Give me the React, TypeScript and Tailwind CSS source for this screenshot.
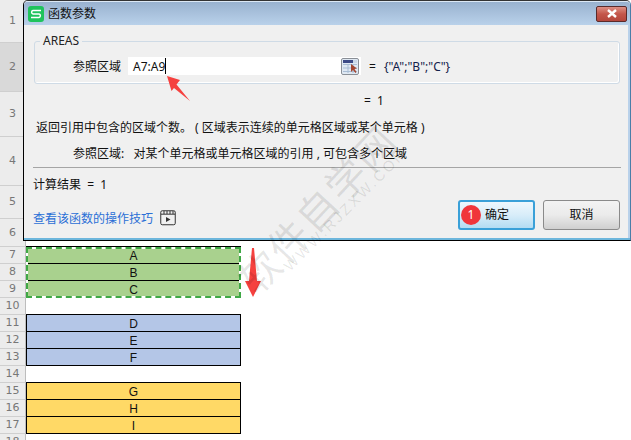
const FONT = "font-['Noto_Sans','Noto_Sans_CJK_SC',sans-serif]";

type Row = { n: number; h: number; label?: string; fill?: string; active?: boolean };

const ROWS: Row[] = [
  { n: 1, h: 43 },
  { n: 2, h: 49, active: true },
  { n: 3, h: 45 },
  { n: 4, h: 49 },
  { n: 5, h: 33 },
  { n: 6, h: 28 },
  { n: 7, h: 17, label: "A", fill: "bg-[#a9d18e]" },
  { n: 8, h: 17, label: "B", fill: "bg-[#a9d18e]" },
  { n: 9, h: 17, label: "C", fill: "bg-[#a9d18e]" },
  { n: 10, h: 17 },
  { n: 11, h: 17, label: "D", fill: "bg-[#b4c6e7]" },
  { n: 12, h: 17, label: "E", fill: "bg-[#b4c6e7]" },
  { n: 13, h: 17, label: "F", fill: "bg-[#b4c6e7]" },
  { n: 14, h: 17 },
  { n: 15, h: 17, label: "G", fill: "bg-[#ffd966]" },
  { n: 16, h: 17, label: "H", fill: "bg-[#ffd966]" },
  { n: 17, h: 17, label: "I", fill: "bg-[#ffd966]" },
  { n: 18, h: 17 },
];

function Sheet() {
  return (
    <div className="flex flex-col">
      {ROWS.map((r) => (
        <div key={r.n} className="flex" style={{ height: r.h }}>
          <div
            className={`w-[26px] shrink-0 pt-px flex items-center justify-center border-r border-b border-r-[#bdbdbd] border-b-[#cfcfcf] text-[11px] text-[#777] font-['DejaVu_Sans',sans-serif] ${
              r.active ? "bg-[#d9d9d9] text-[#3e8e41]" : "bg-[#ececec]"
            }`}
          >
            {r.n}
          </div>
          {r.label && (
            <div
              className={`w-[215px] -mt-px pt-[2px] flex items-center justify-center border border-black text-[12px] text-[#111] font-['Liberation_Sans',sans-serif] ${r.fill}`}
              style={{ height: r.h + 1 }}
            >
              {r.label}
            </div>
          )}
        </div>
      ))}
    </div>
  );
}

function AppLogo() {
  return (
    <svg width="16" height="16" viewBox="0 0 16 16" className="shrink-0">
      <rect width="16" height="16" rx="3" fill="#1fc35c" />
      <path d="M13 4.5H5A1.8 1.8 0 0 0 5 8H11A1.8 1.8 0 0 1 11 11.5H3" fill="none" stroke="#fff" strokeWidth="1.5" />
    </svg>
  );
}

function RefIcon() {
  return (
    <svg width="18" height="17" viewBox="0 0 18 17" className="shrink-0">
      <rect x="0.5" y="0.5" width="17" height="16" rx="1.5" fill="#dfe8f2" stroke="#8a8f96" />
      <rect x="2" y="2" width="10" height="3" fill="#3c4a86" />
      <rect x="12" y="2" width="4" height="3" fill="#c9d6e6" />
      <path d="M2 6.5H16M2 10H16M2 13.5H16M7 6V15M12 6V15" stroke="#a9bdd4" strokeWidth="1" fill="none" />
      <path d="M10 6L10 14L12 12L14.5 15L15.5 14L13.5 11L16 10.5Z" fill="#a3452f" />
    </svg>
  );
}

function VideoIcon() {
  return (
    <svg width="16" height="16" viewBox="0 0 16 16" className="shrink-0">
      <rect x="0.75" y="0.75" width="14.5" height="14" rx="1.5" fill="none" stroke="#333" strokeWidth="1" />
      <path d="M1 4.2H15M4 1V4M7 1V4M10 1V4M13 1V4" stroke="#333" strokeWidth="1" fill="none" />
      <path d="M6 7L10.5 9.5L6 12Z" fill="#333" />
    </svg>
  );
}

function Dialog() {
  return (
    <div
      className={`absolute left-[23px] top-0 w-[608px] h-[241px] flex flex-col rounded-t-[5px] border border-black border-t-[#333] border-r-[#4a7ea8] bg-[#f0f0f0] shadow-[inset_0_-2px_0_#6db6dc,inset_-2px_0_0_#b9d1ea] text-[12px] text-[#111] ${FONT}`}
    >
      <div className="h-[24px] shrink-0 flex items-center pl-[4px] pr-[3px] rounded-t-[4px] bg-gradient-to-b from-[#99b2cf] to-[#b9d1ea] border-t border-white/50">
        <AppLogo />
        <span className="ml-[4px] text-[12px]">函数参数</span>
        <div className="ml-auto w-[31px] h-[16px] rounded-[2px] border border-[#5a2a2a] bg-gradient-to-b from-[#dd8f84] via-[#c4574b] to-[#b4463c] flex items-center justify-center">
          <svg width="12" height="9" viewBox="0 0 12 9">
            <path d="M2 1L10 8M10 1L2 8" stroke="#fff" strokeWidth="2.4" fill="none" />
          </svg>
        </div>
      </div>

      <div className="relative mx-[10px] mt-[16px] h-[43px] pt-[7px] rounded-[3px] border border-[#cfdbe6] shadow-[inset_-1px_-1px_0_#fff] flex items-center pl-[38px]">
        <span className="absolute left-[5px] -top-[10px] px-[3px] bg-[#f0f0f0] text-[12px] leading-[18px] text-[#222]">AREAS</span>
        <span className="w-[48px] pt-[2px]">参照区域</span>
        <div className="ml-[7px] w-[233px] h-[18px] bg-white flex items-center pl-[5px] pr-[2px]">
          <span className="text-[12px] pt-[2px]">A7:A9</span>
          <span className="w-px h-[16px] bg-black" />
          <span className="ml-auto"><RefIcon /></span>
        </div>
        <span className="ml-[8px] pt-[2px]">=</span>
        <span className="ml-[8px] pt-[2px] text-[12px] text-[#12204a]">{'{"A";"B";"C"}'}</span>
      </div>

      <div className="mt-[7px] h-[18px] pl-[340px] leading-[20px]">
        = &nbsp;1
      </div>

      <div className="mt-[9px] h-[18px] pl-[12px] leading-[20px] whitespace-nowrap">
        返回引用中包含的区域个数。 ( 区域表示连续的单元格区域或某个单元格 )
      </div>
      <div className="mt-[8px] h-[18px] pl-[49px] leading-[20px] whitespace-nowrap">
        参照区域:&nbsp;&nbsp; 对某个单元格或单元格区域的引用 , 可包含多个区域
      </div>

      <div className="mx-[9px] mt-[5px] h-px bg-[#a5a5a5]" />

      <div className="flex mt-[7px] pl-[9px] pr-[10px]">
        <div className="flex flex-col">
          <span className="h-[18px] leading-[20px]">计算结果 &nbsp;= &nbsp;1</span>
          <span className="mt-[16px] flex items-center gap-[7px] h-[18px]">
            <span className="text-[#2a6fd6] pt-[2px]">查看该函数的操作技巧</span>
            <VideoIcon />
          </span>
        </div>
        <div className="ml-auto mt-[25px] flex gap-[8px]">
          <div className="relative w-[77px] h-[30px] rounded-[3px] border-2 border-[#3aa0d8] bg-gradient-to-b from-[#eef7fd] via-[#d8edf9] to-[#b3dcf3] flex items-center pl-[24px]">
            <span className="absolute left-[1px] top-[3px] w-[20px] h-[20px] rounded-full bg-[#f0353b] text-white text-[12px] leading-[20px] text-center">1</span>
            <span className="ml-[1px]">确定</span>
          </div>
          <div className="w-[77px] h-[30px] rounded-[3px] border border-[#8a8a8a] bg-gradient-to-b from-[#f3f3f3] via-[#ebebeb] to-[#cfcfcf] flex items-center justify-center">
            取消
          </div>
        </div>
      </div>
    </div>
  );
}

function Annotations() {
  return (
    <>
      {/* selection marquee over rows 7-9 */}
      <div className="absolute left-[26px] top-[247px] w-[215px] h-[51px] border-2 border-white">
        <div className="absolute -inset-[2px] border-2 border-dashed border-[#3fa845]" />
      </div>

      {/* red arrows */}
      <svg className="absolute left-0 top-0 pointer-events-none" width="631" height="440" viewBox="0 0 631 440">
        <path d="M167 76L180 80L176.5 84.5L190 101L174 88L171.5 91Z" fill="#f5413f" />
        <path d="M252 248H254L257 281H261L253 297L245 281H249Z" fill="#f5413f" />
      </svg>

      {/* watermark */}
      <div className="absolute left-[213px] top-[190px] w-[200px] -rotate-[47deg] text-center text-[40px] leading-[44px] tracking-[2px] whitespace-nowrap text-black/10 font-['Noto_Sans_CJK_SC',sans-serif] pointer-events-none">
        软件自学网
      </div>
      <div className="absolute left-[263px] top-[203px] w-[160px] -rotate-[45deg] text-center text-[15px] leading-[18px] tracking-[2.5px] whitespace-nowrap text-black/10 font-['Liberation_Sans',sans-serif] pointer-events-none">
        WWW.RJZXW.COM
      </div>
    </>
  );
}

export default function App() {
  return (
    <div className="relative w-[631px] h-[440px] overflow-hidden bg-white">
      <Sheet />
      <Dialog />
      <Annotations />
    </div>
  );
}
